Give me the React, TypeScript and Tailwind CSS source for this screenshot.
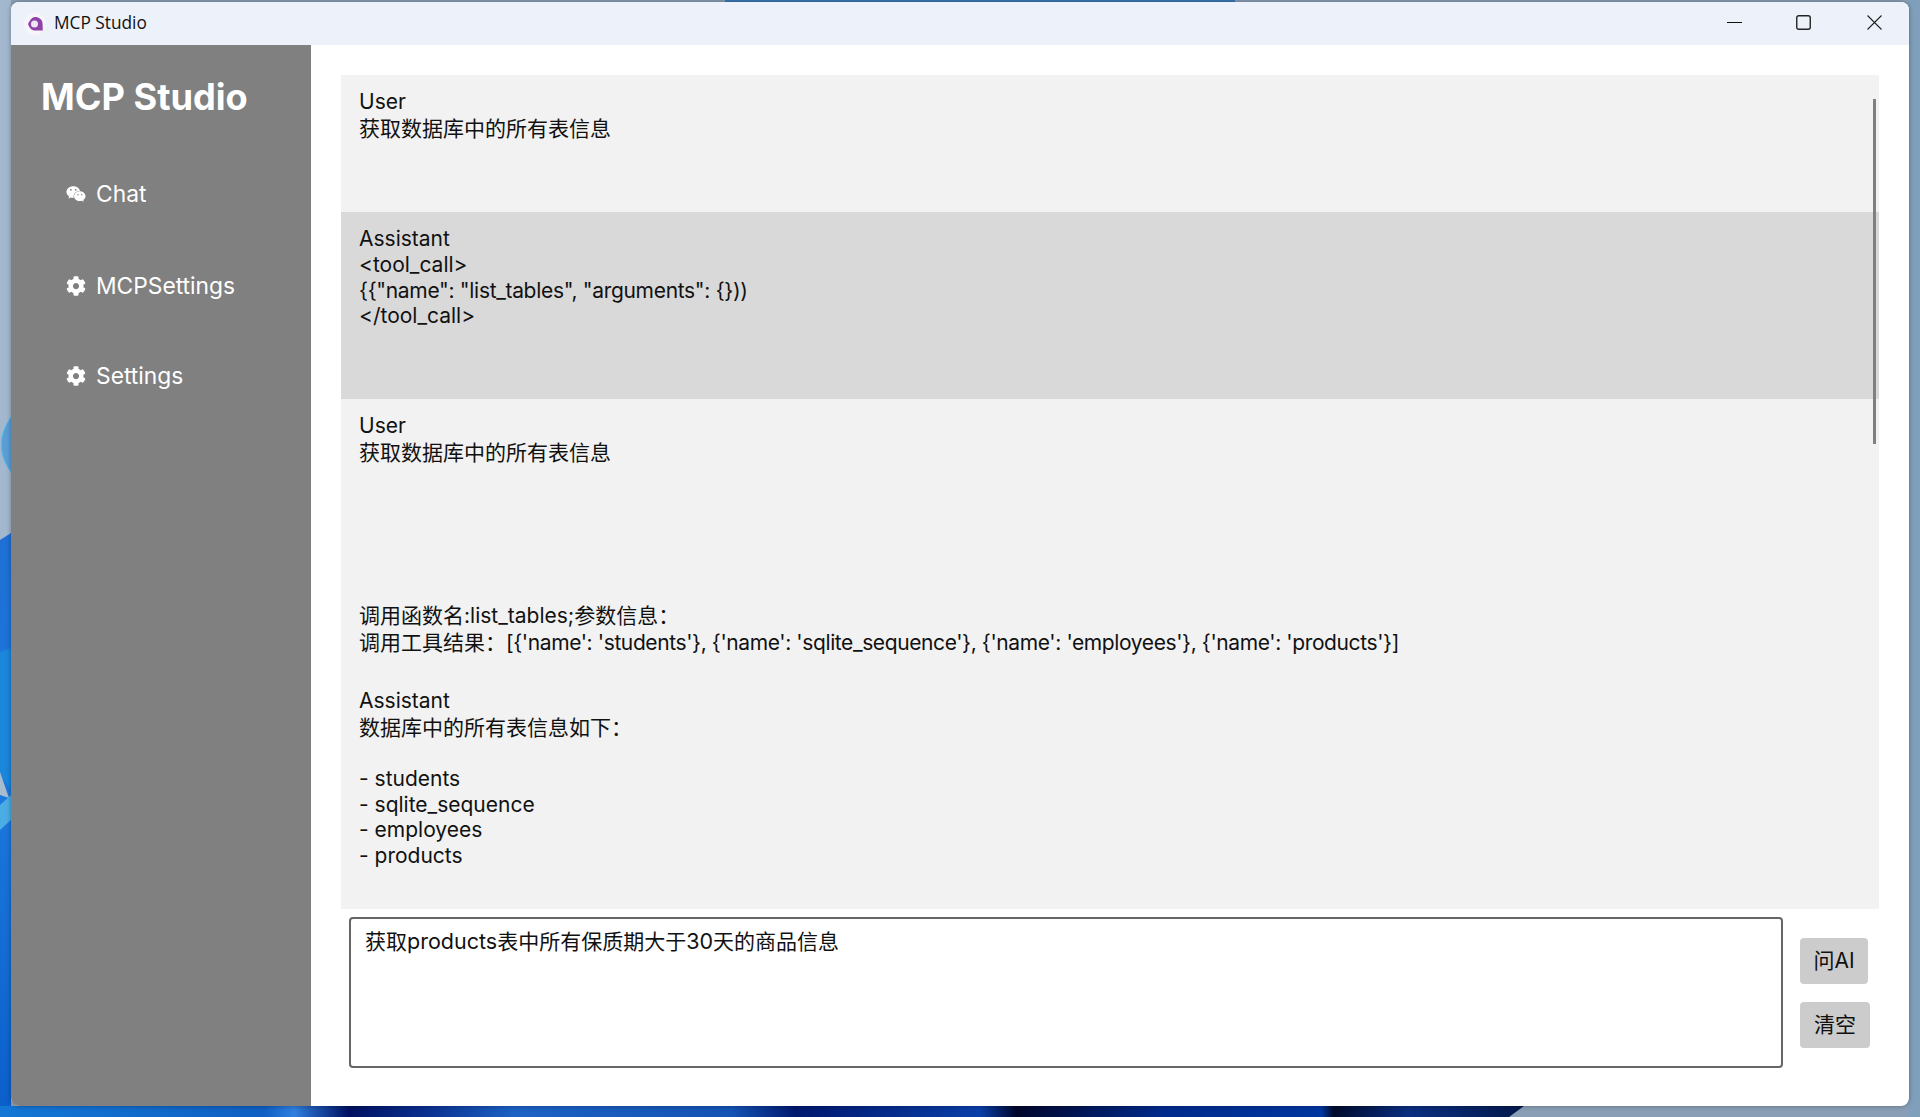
import { FaCog, FaWeixin } from 'react-icons/fa';

const cjk = "font-['Inter','Noto_Sans_CJK_SC',sans-serif]";

// CJK glyphs and latin glyphs don't share one size in the original
function Mixed({ text }: { text: string }) {
  const parts = text.split(/([\u3000-\u9fff\uff00-\uffef]+)/);
  return (
    <>
      {parts.map((p, i) =>
        i % 2 === 1 ? <span key={i} className="text-[21px] tracking-normal">{p}</span> : <span key={i}>{p}</span>
      )}
    </>
  );
}

const heights: Record<number, string> = {
  25: 'h-[25px] leading-[25px]',
  26: 'h-[26px] leading-[26px]',
  27: 'h-[27px] leading-[27px]',
  28: 'h-[28px] leading-[28px]',
};

function Line({ h, text, className }: { h: number; text: string; className?: string }) {
  return (
    <div className={`whitespace-pre ${heights[h]} ${className ?? ''}`}>
      <Mixed text={text} />
    </div>
  );
}

function NavItem({ icon, label, className }: { icon: React.ReactNode; label: string; className: string }) {
  return (
    <div className={`flex items-center pl-[55px] text-[22.8px] leading-[28px] text-white ${className}`}>
      <span className="flex w-[30px] shrink-0 items-center">{icon}</span>
      <span>{label}</span>
    </div>
  );
}

function Wallpaper() {
  return (
    <svg className="absolute inset-0" width="1920" height="1117" viewBox="0 0 1920 1117">
      <defs>
        <linearGradient id="bottom" x1="0" y1="0" x2="1" y2="0">
          <stop offset="0" stopColor="#1377d6" />
          <stop offset="0.173" stopColor="#0f5fc4" />
          <stop offset="0.193" stopColor="#2f7fe0" />
          <stop offset="0.229" stopColor="#001060" />
          <stop offset="0.28" stopColor="#0a2f90" />
          <stop offset="0.337" stopColor="#1c62c4" />
          <stop offset="0.48" stopColor="#1453b4" />
          <stop offset="0.522" stopColor="#00186e" />
          <stop offset="0.643" stopColor="#0a3fa8" />
          <stop offset="0.667" stopColor="#00062c" />
          <stop offset="0.763" stopColor="#002a8c" />
          <stop offset="0.867" stopColor="#0036a0" />
          <stop offset="0.875" stopColor="#000a2c" />
          <stop offset="0.924" stopColor="#0a2f80" />
          <stop offset="1" stopColor="#04194c" />
        </linearGradient>
        <linearGradient id="left" x1="0" y1="0" x2="0" y2="1">
          <stop offset="0" stopColor="#1f70d4" />
          <stop offset="0.45" stopColor="#1b78dc" />
          <stop offset="1" stopColor="#0b5fca" />
        </linearGradient>
      </defs>
      <rect width="1920" height="1117" fill="#8a9fb6" />
      <rect x="725" y="0" width="510" height="3" fill="#3a78b8" />
      <rect x="0" y="0" width="11" height="540" fill="#a3b8cf" />
      <path d="M11 417 C-2 435 -2 455 11 472" fill="#5a9ed6" stroke="#56c0ea" />
      <path d="M0 540 L11 533 V1117 H0Z" fill="url(#left)" />
      <path d="M0 652 L11 648 V790 L0 775Z" fill="#1a86dc" />
      <path d="M0 772 L9 798 L0 795Z" fill="#a9bccd" />
      <path d="M0 805 L11 795 V820 L0 830Z" fill="#4aaee4" />
      <path d="M0 1106 H1524 L1509 1117 H0Z" fill="url(#bottom)" />
      <rect x="1908" y="0" width="12" height="1117" fill="#7f9fbb" />
    </svg>
  );
}

export default function App() {
  return (
    <div className="relative flex h-[1117px] w-[1920px] flex-col overflow-hidden pt-[2px] pr-[11px] pb-[11px] pl-[11px]">
      <Wallpaper />
      <div className={`relative flex h-[1104px] flex-col overflow-hidden rounded-[8px] bg-white text-[#111111] shadow-[0_0_5px_rgba(0,0,0,0.35)] ${cjk}`}>
        {/* Title bar */}
        <div className="flex h-[43px] shrink-0 items-center bg-[#edf2fa]">
          <div className="ml-[13px] flex h-[22px] w-[22px] items-center justify-center rounded-full bg-[#f7f4fa]">
            <svg width="18" height="16" viewBox="0 0 18 16">
              <path d="M9 1 C13 1 16 3.5 16.5 7 L16.8 14.5 L9.5 14.5 C6 14.5 4 13 2 8 C4 4 6 1 9 1Z" fill="#8f42a8" />
              <circle cx="8.5" cy="8" r="3.5" fill="#f0e6f4" />
            </svg>
          </div>
          <span className="mb-[2px] ml-[8px] text-[17.3px] font-['Open_Sans',sans-serif]">MCP Studio</span>
          <div className="mb-[2px] ml-auto flex items-center">
            <svg width="15" height="15" viewBox="0 0 15 15" className="mr-[54px]">
              <path d="M0 7.5H15" stroke="#111" strokeWidth="1" />
            </svg>
            <svg width="15" height="15" viewBox="0 0 15 15" className="mr-[56px]">
              <rect x="0.75" y="0.75" width="13.5" height="13.5" rx="2" fill="none" stroke="#222" strokeWidth="1.4" />
            </svg>
            <svg width="15" height="15" viewBox="0 0 15 15" className="mr-[27px]">
              <path d="M0.5 0.5L14.5 14.5M14.5 0.5L0.5 14.5" stroke="#222" strokeWidth="1.1" />
            </svg>
          </div>
        </div>

        <div className="flex min-h-0 flex-1">
          {/* Sidebar */}
          <aside className="w-[300px] shrink-0 bg-[#808080]">
            <h1 className="ml-[30px] mt-[30px] text-[36.2px] leading-[44px] font-bold text-white">MCP Studio</h1>
            <NavItem icon={<FaWeixin size={20} />} label="Chat" className="mt-[61px]" />
            <NavItem icon={<FaCog size={20} />} label="MCPSettings" className="mt-[64px]" />
            <NavItem icon={<FaCog size={20} />} label="Settings" className="mt-[62px]" />
          </aside>

          {/* Main */}
          <main className="flex min-w-0 flex-1 flex-col pl-[30px] pr-[30px] pt-[30px]">
            <div className="relative h-[834px] shrink-0 bg-[#f2f2f2] text-[21px]">
              <div className="h-[137px] pl-[18px] pt-[13px]">
                <Line h={27} text="User" />
                <Line h={28} text="获取数据库中的所有表信息" />
              </div>
              <div className="h-[187px] bg-[#d9d9d9] pl-[18px] pt-[13px]">
                <Line h={27} text="Assistant" />
                <Line h={26} text="<tool_call>" />
                <Line h={25} text={'{{"name": "list_tables", "arguments": {}))'} className="tracking-[-0.31px]" />
                <Line h={25} text="</tool_call>" />
              </div>
              <div className="pl-[18px] pt-[13px]">
                <Line h={27} text="User" />
                <Line h={28} text="获取数据库中的所有表信息" />
                <div className="h-[135px]" />
                <Line h={27} text="调用函数名:list_tables;参数信息：" />
                <Line h={27} text={"调用工具结果：[{'name': 'students'}, {'name': 'sqlite_sequence'}, {'name': 'employees'}, {'name': 'products'}]"} className="tracking-[-0.39px]" />
                <div className="h-[31px]" />
                <Line h={27} text="Assistant" />
                <Line h={28} text="数据库中的所有表信息如下：" />
                <div className="h-[23px]" />
                <Line h={27} text="- students" />
                <Line h={25} text="- sqlite_sequence" />
                <Line h={26} text="- employees" />
                <Line h={25} text="- products" />
              </div>
              <div className="absolute right-[3px] top-[24px] h-[345px] w-[3px] bg-[#808080]" />
            </div>

            {/* Input row */}
            <div className="flex">
              <div className="ml-[8px] mt-[8px] h-[151px] w-[1434px] shrink-0 rounded-[4px] border-2 border-[#666666] px-[14px] pt-[9px] text-[21.5px] leading-[26px]">
                <Mixed text="获取products表中所有保质期大于30天的商品信息" />
              </div>
              <div className="ml-[17px] flex flex-col items-start gap-[18px] pt-[29px] text-[21px]">
                <button className="h-[46px] w-[68px] rounded-[4px] bg-[#cccccc]"><Mixed text="问AI" /></button>
                <button className="h-[46px] w-[70px] rounded-[4px] bg-[#cccccc]"><Mixed text="清空" /></button>
              </div>
            </div>
          </main>
        </div>
      </div>
    </div>
  );
}
